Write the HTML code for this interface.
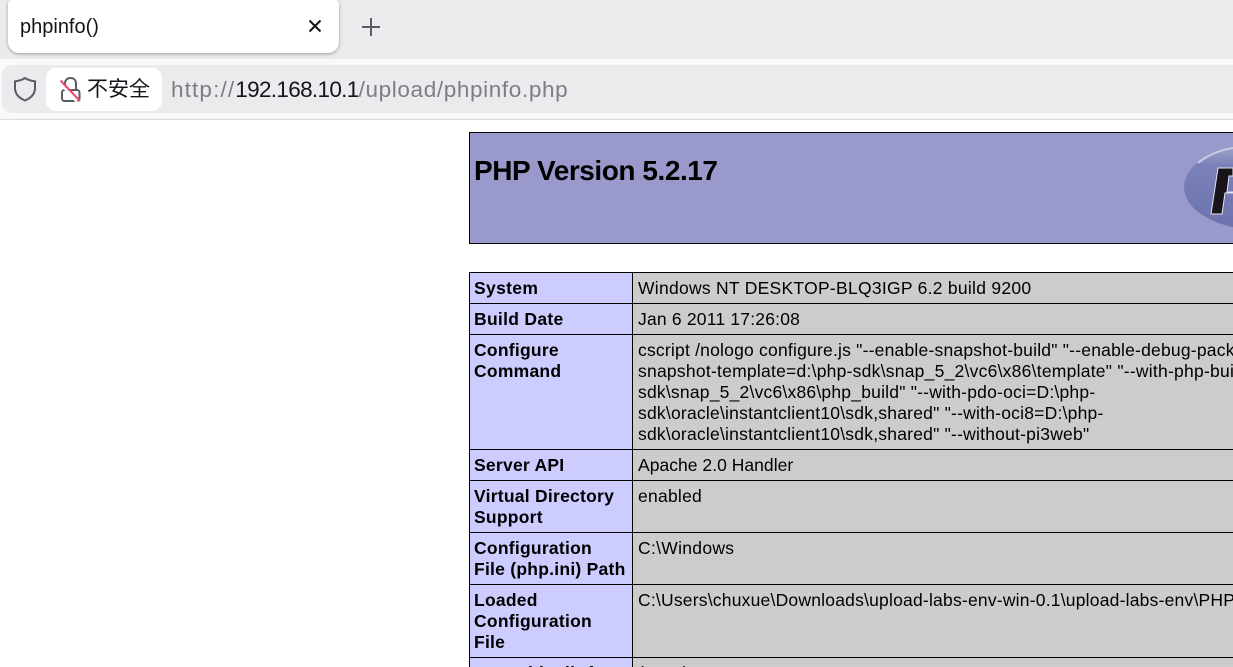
<!DOCTYPE html>
<html lang="zh">
<head>
<meta charset="utf-8">
<title>phpinfo()</title>
<style>
html,body{margin:0;padding:0;background:#fff;overflow:hidden}
body{width:1233px;height:667px;position:relative;overflow:hidden;font-family:"Liberation Sans",Arial,sans-serif;color:#000}
.a{position:absolute;white-space:nowrap}
#tabbar{left:0;top:0;width:1233px;height:59px;background:#ebebee}
#toolbar{left:0;top:59px;width:1233px;height:60px;background:#f9f9fb}
#line{left:0;top:119px;width:1233px;height:1px;background:#dcdcde}
#tab{left:8px;top:0;width:331px;height:53px;background:#fff;border-radius:4px 4px 11px 11px;box-shadow:0 1px 3px rgba(0,0,0,.35)}
#tabtitle{left:20px;top:15px;font:20px/24px "Liberation Sans",sans-serif;color:#15141a}
#url{left:2px;top:65px;width:1231px;height:48px;background:#ebebee;border-radius:10px 0 0 10px}
#chip{left:46px;top:68px;width:116px;height:43px;background:#fff;border-radius:10px}
#cn{left:87px;top:77px;font:21px/25px "Liberation Sans","Noto Sans CJK SC",sans-serif;color:#15141a}
#addr{left:171px;top:76px;font:22.5px/27px "Liberation Sans",sans-serif;color:#7d7d83}
#addr span{letter-spacing:1.14px}
#addr b{font-weight:400;color:#15141a;letter-spacing:-.67px}
#addr i{font-style:normal;letter-spacing:.63px}
.l{position:absolute;background:#000}
.c{position:absolute}
.t,.v{position:absolute;font-size:17.5px;line-height:21px;white-space:nowrap}
.t{font-weight:700;left:474px;letter-spacing:.25px}
.v{left:638px;color:#000;width:595px;overflow:hidden}
.v div{height:21px}
h1{position:absolute;margin:0;left:474px;top:154px;font-size:28px;line-height:34px;font-weight:700;white-space:nowrap;letter-spacing:-.45px}
</style>
</head>
<body>
<div class="a" id="tabbar"></div>
<div class="a" id="toolbar"></div>
<div class="a" id="line"></div>
<div class="a" id="tab"></div>
<div class="a" id="tabtitle">phpinfo()</div>
<svg class="a" style="left:305px;top:16px" width="20" height="20" viewBox="0 0 20 20"><path d="M4.500 4.500L15.500 15.500M15.500 4.500L4.500 15.500" stroke="#15141a" stroke-width="2" fill="none"/></svg>
<svg class="a" style="left:360px;top:16px" width="22" height="22" viewBox="0 0 22 22"><path d="M11 2V20M2 11H20" stroke="#5b5b66" stroke-width="2" fill="none"/></svg>

<div class="a" id="url"></div>
<svg class="a" style="left:13px;top:76px" width="24" height="26" viewBox="0 0 24 26"><path d="M12 2C9 4 5.500 5 2 5.200V12C2 18 6 22 12 24.500C18 22 22 18 22 12V5.200C18.500 5 15 4 12 2Z" fill="none" stroke="#5b5b66" stroke-width="2" stroke-linejoin="round"/></svg>
<div class="a" id="chip"></div>
<svg class="a" style="left:58px;top:76px" width="24" height="28" viewBox="0 0 24 28"><path d="M7 14V7.500C7 4 9.300 2 12.500 2C15.700 2 18 4 18 7.500V14" fill="none" stroke="#5b5b66" stroke-width="2"/><rect x="4" y="14" width="17.500" height="11" rx="2.500" fill="none" stroke="#5b5b66" stroke-width="2"/><path d="M2 7L19 26" stroke="#fff" stroke-width="2.500"/><path d="M2.500 4.500L22 25" stroke="#f0476f" stroke-width="2"/></svg>
<div class="a" id="cn">不安全</div>
<div class="a" id="addr"><span>http://</span><b>192.168.10.1</b><i>/upload/phpinfo.php</i></div>

<!-- header box -->
<div class="c" style="left:469px;top:132px;width:764px;height:112px;background:#9999cc"></div>
<div class="l" style="left:469px;top:132px;width:764px;height:1px"></div>
<div class="l" style="left:469px;top:243px;width:764px;height:1px"></div>
<div class="l" style="left:469px;top:132px;width:1px;height:112px"></div>
<h1>PHP Version 5.2.17</h1>
<svg class="a" style="left:1184px;top:133px" width="49" height="110" viewBox="0 0 49 110">
<defs><linearGradient id="g" x1="0" y1="0" x2="0" y2="1"><stop offset="0" stop-color="#a4a7ce"/><stop offset=".25" stop-color="#7a80b8"/><stop offset="1" stop-color="#6c73ad"/></linearGradient></defs>
<ellipse cx="76" cy="54" rx="76" ry="43" fill="url(#g)"/>
<path d="M14 30C24 22 36 17 49 15" fill="none" stroke="#c9cbe4" stroke-width="2"/>
<path d="M34 35H49V43H45L43 59H49V60H41L41 60L38 81H27Z" fill="#17141a" stroke="#e4e4f0" stroke-width="1"/>
</svg>

<!-- table backgrounds -->
<div class="c" style="left:469px;top:272px;width:164px;height:395px;background:#ccccff"></div>
<div class="c" style="left:633px;top:272px;width:600px;height:395px;background:#cccccc"></div>
<div class="l" style="left:469px;top:272px;width:1px;height:395px"></div>
<div class="l" style="left:632px;top:272px;width:1px;height:395px"></div>
<div class="l" style="left:469px;top:272px;width:764px;height:1px"></div>
<div class="l" style="left:469px;top:303px;width:764px;height:1px"></div>
<div class="l" style="left:469px;top:334px;width:764px;height:1px"></div>
<div class="l" style="left:469px;top:449px;width:764px;height:1px"></div>
<div class="l" style="left:469px;top:480px;width:764px;height:1px"></div>
<div class="l" style="left:469px;top:532px;width:764px;height:1px"></div>
<div class="l" style="left:469px;top:584px;width:764px;height:1px"></div>
<div class="l" style="left:469px;top:657px;width:764px;height:1px"></div>

<div class="t" style="top:278px;letter-spacing:.33px">System</div>
<div class="v" style="top:278px;letter-spacing:.27px">Windows NT DESKTOP-BLQ3IGP 6.2 build 9200</div>
<div class="t" style="top:309px;letter-spacing:.3px">Build Date</div>
<div class="v" style="top:309px;letter-spacing:.2px">Jan 6 2011 17:26:08</div>
<div class="t" style="top:340px">Configure<br>Command</div>
<div class="v" style="top:340px">
<div style="letter-spacing:.21px">cscript /nologo configure.js "--enable-snapshot-build" "--enable-debug-pack" "--with-</div>
<div style="letter-spacing:.24px">snapshot-template=d:\php-sdk\snap_5_2\vc6\x86\template" "--with-php-build=d:\php-</div>
<div style="letter-spacing:.21px">sdk\snap_5_2\vc6\x86\php_build" "--with-pdo-oci=D:\php-</div>
<div style="letter-spacing:.22px">sdk\oracle\instantclient10\sdk,shared" "--with-oci8=D:\php-</div>
<div style="letter-spacing:.22px">sdk\oracle\instantclient10\sdk,shared" "--without-pi3web"</div>
</div>
<div class="t" style="top:455px">Server API</div>
<div class="v" style="top:455px;letter-spacing:.03px">Apache 2.0 Handler</div>
<div class="t" style="top:486px">Virtual Directory<br>Support</div>
<div class="v" style="top:486px;letter-spacing:.25px">enabled</div>
<div class="t" style="top:538px">Configuration<br>File (php.ini) Path</div>
<div class="v" style="top:538px;letter-spacing:.3px">C:\Windows</div>
<div class="t" style="top:590px">Loaded<br>Configuration<br>File</div>
<div class="v" style="top:590px;letter-spacing:.21px">C:\Users\chuxue\Downloads\upload-labs-env-win-0.1\upload-labs-env\PHP\php.ini</div>
<div class="t" style="top:663px;height:4px;overflow:hidden">Scan this dir for</div>
<div class="v" style="top:663px;height:4px">(none)</div>
</body>
</html>
